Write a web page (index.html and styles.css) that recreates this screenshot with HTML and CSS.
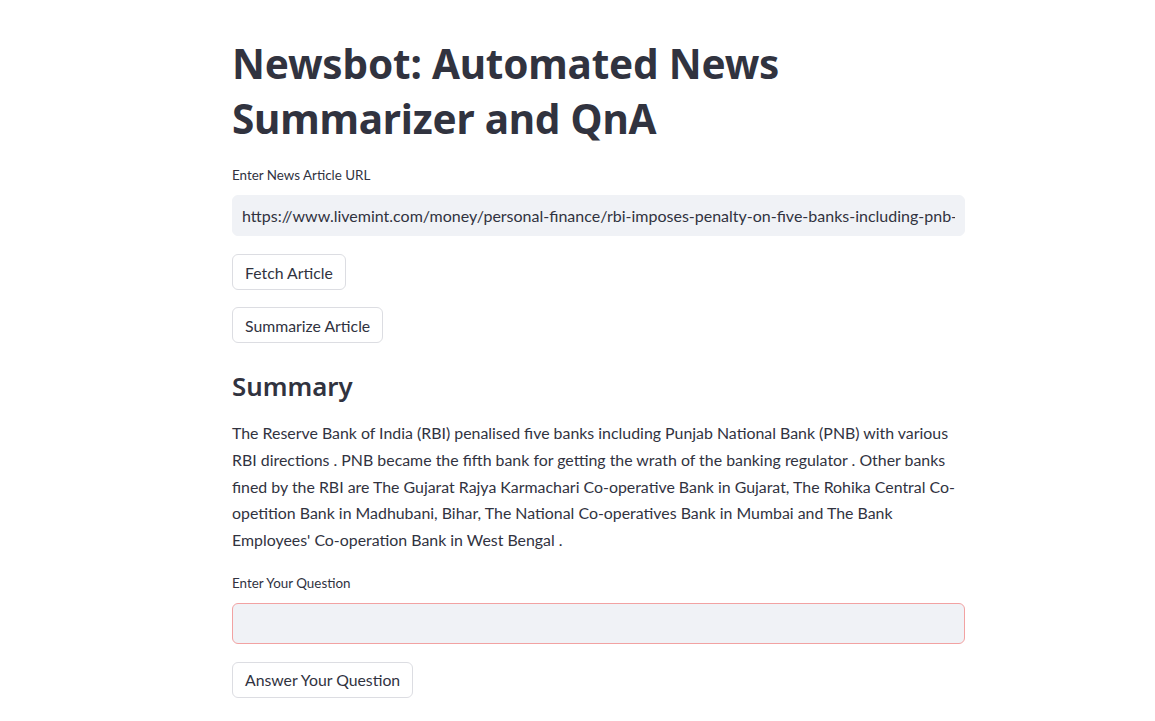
FILE: index.html
```html
<!DOCTYPE html>
<html lang="en">
<head>
<meta charset="utf-8">
<title>Newsbot</title>
<link rel="stylesheet" href="styles.css">
</head>
<body>
<main class="page">
  <h1 class="title">Newsbot: Automated News Summarizer and QnA</h1>
  <div class="field">
    <label class="label" for="url">Enter News Article URL</label>
    <div class="input"><input id="url" type="text" value="https://www.livemint.com/money/personal-finance/rbi-imposes-penalty-on-five-banks-including-pnb-check-list-11687180153473.html"></div>
  </div>
  <div class="btn-row btn-first"><button class="btn">Fetch Article</button></div>
  <div class="btn-row"><button class="btn">Summarize Article</button></div>
  <h2 class="subtitle">Summary</h2>
  <p class="summary">The Reserve Bank of India (RBI) penalised five banks including Punjab National Bank (PNB) with various RBI directions . PNB became the fifth bank for getting the wrath of the banking regulator . Other banks fined by the RBI are The Gujarat Rajya Karmachari Co-operative Bank in Gujarat, The Rohika Central Co-opetition Bank in Madhubani, Bihar, The National Co-operatives Bank in Mumbai and The Bank Employees' Co-operation Bank in West Bengal .</p>
  <div class="field">
    <label class="label" for="q">Enter Your Question</label>
    <div class="input input-error"><input id="q" type="text" value=""></div>
  </div>
  <div class="btn-row btn-first"><button class="btn">Answer Your Question</button></div>
</main>
</body>
</html>
```

FILE: styles.css
```css
html, body {
  margin: 0;
  padding: 0;
  background: #ffffff;
}
body {
  font-family: "Lato", "Noto Sans", sans-serif;
  color: #31333f;
}
.page {
  width: 733px;
  margin: 0 auto 0 232px;
  padding-top: 36px;
  display: flex;
  flex-direction: column;
}
.title {
  margin: 0;
  font-family: "Noto Sans", sans-serif;
  font-weight: 700;
  font-size: 40.5px;
  line-height: 55px;
  letter-spacing: -0.2px;
  color: #31333f;
  width: 600px;
}
.field {
  display: flex;
  flex-direction: column;
  margin-top: 20px;
}
.label {
  font-size: 13.4px;
  line-height: 18px;
  color: #31333f;
  margin-bottom: 11px;
}
.input {
  height: 41px;
  background: #f0f2f6;
  border: 1px solid #f0f2f6;
  border-radius: 6px;
  box-sizing: border-box;
  display: flex;
  align-items: center;
  overflow: hidden;
}
.input input {
  border: 0;
  outline: none;
  background: transparent;
  font-family: inherit;
  font-size: 16px;
  color: #31333f;
  width: 100%;
  padding: 0 9px;
}
.input-error {
  border-color: #f2a2a2;
}
.btn-row {
  display: flex;
  margin-top: 17px;
}
.btn-first {
  margin-top: 18px;
}
.btn {
  font-family: inherit;
  font-size: 15.8px;
  color: #31333f;
  background: #ffffff;
  border: 1px solid #dcdde2;
  border-radius: 6px;
  height: 36px;
  padding: 0 12px;
  cursor: pointer;
}
.subtitle {
  margin: 26px 0 0;
  font-family: "Noto Sans", sans-serif;
  font-weight: 600;
  font-size: 25.8px;
  line-height: 34px;
}
.summary {
  margin: 17px 0 0;
  font-size: 15.9px;
  line-height: 26.8px;
  color: #31333f;
}
```
